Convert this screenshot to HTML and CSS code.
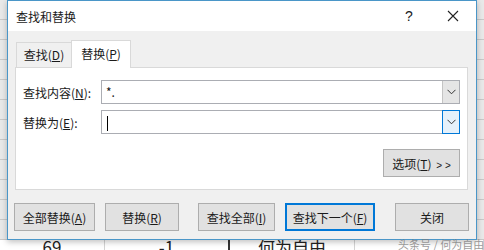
FILE: index.html
```html
<!DOCTYPE html>
<html lang="zh-CN">
<head>
    <meta charset="UTF-8">
    <title>查找和替换</title>
    <link rel="stylesheet" href="styles.css">
</head>
<body>
    <div class="sheet">
        <div class="sheet-row">
            <span class="cell c1">69</span>
            <span class="cell c2">-1</span>
            <span class="cell c3">何为自由</span>
            <span class="cell c4"></span>
        </div>
    </div>

    <div class="dialog">
        <div class="titlebar">
            <span class="title">查找和替换</span>
            <span class="help">?</span>
            <span class="close">
                <svg width="12" height="12" viewBox="0 0 12 12"><path d="M1 1 L11 11 M11 1 L1 11" stroke="#222" stroke-width="1.1" fill="none"/></svg>
            </span>
        </div>

        <div class="body">
            <div class="tabs">
                <div class="tab">查找(<u>D</u>)</div>
                <div class="tab active">替换(<u>P</u>)</div>
            </div>
            <div class="panel">
                <div class="field">
                    <label>查找内容(<u>N</u>):</label>
                    <div class="combo">
                        <span class="value">*.</span>
                        <span class="drop">
                            <svg width="9" height="6" viewBox="0 0 9 6"><path d="M0.5 0.8 L4.5 4.8 L8.5 0.8" stroke="#333" stroke-width="1" fill="none"/></svg>
                        </span>
                    </div>
                </div>
                <div class="field">
                    <label>替换为(<u>E</u>):</label>
                    <div class="combo focus">
                        <span class="value"><i class="caret"></i></span>
                        <span class="drop">
                            <svg width="9" height="6" viewBox="0 0 9 6"><path d="M0.5 0.8 L4.5 4.8 L8.5 0.8" stroke="#333" stroke-width="1" fill="none"/></svg>
                        </span>
                    </div>
                </div>
                <div class="options-row">
                    <button class="btn options">选项(<u>T</u>) <span class="arrows">&gt; &gt;</span></button>
                </div>
            </div>

            <div class="actions">
                <button class="btn b1">全部替换(<u>A</u>)</button>
                <button class="btn b2">替换(<u>R</u>)</button>
                <button class="btn b3">查找全部(<u>I</u>)</button>
                <button class="btn b4 default">查找下一个(<u>F</u>)</button>
                <button class="btn b5">关闭</button>
            </div>
        </div>
    </div>

    <div class="watermark">头条号 / 何为自由</div>
</body>
</html>
```

FILE: styles.css
```css
body {
    margin: 0;
    width: 484px;
    height: 250px;
    overflow: hidden;
    position: relative;
    font-family: "Noto Sans CJK SC", "Liberation Sans", sans-serif;
    font-size: 12px;
    color: #1a1a1a;
    background-color: #e9e9e9;
    background-image: repeating-linear-gradient(to bottom, transparent 0, transparent 19px, #c9c9c9 19px, #c9c9c9 20px);
}

/* 背景表格 */
.sheet {
    position: absolute;
    left: 0;
    top: 240px;
    width: 484px;
    height: 10px;
    background: #fff;
    overflow: hidden;
}

.sheet-row {
    display: flex;
    height: 22px;
    margin-top: -4px;
}

.cell {
    box-sizing: border-box;
    border-right: 1px solid #d4d4d4;
    font-size: 17px;
    line-height: 22px;
    color: #222;
    text-align: center;
}

.c1 { width: 105px; }
.c2 { width: 125px; border-right: 2px solid #333; }
.c3 { width: 125px; }
.c4 { flex: 1; }

/* 对话框 */
.dialog {
    position: absolute;
    left: 7px;
    top: 0;
    width: 470px;
    height: 240px;
    box-sizing: border-box;
    border: 1px solid #4a96c8;
    background: #f0f0f0;
    box-shadow: 0 2px 6px rgba(0, 0, 0, 0.25);
}

.titlebar {
    height: 30px;
    background: #fff;
    display: flex;
    align-items: center;
    padding-left: 8px;
}

.title {
    flex: 1;
    font-size: 12px;
}

.help {
    width: 20px;
    font-family: "Liberation Sans", sans-serif;
    font-size: 14px;
    text-align: center;
    margin-right: 28px;
}

.close {
    width: 12px;
    height: 12px;
    margin-right: 17px;
    display: flex;
}

.body {
    padding: 9px 7px 0 7px;
}

.tabs {
    display: flex;
    align-items: flex-end;
    height: 27px;
    padding-left: 1px;
}

.tab {
    box-sizing: border-box;
    width: 55px;
    height: 25px;
    line-height: 23px;
    text-align: center;
    border: 1px solid #d9d9d9;
    border-bottom: 0;
    border-right: 0;
    background: #f0f0f0;
}

.tab.active {
    width: 60px;
    height: 28px;
    line-height: 26px;
    background: #fff;
    border-right: 1px solid #d9d9d9;
    position: relative;
    top: 1px;
}

.panel {
    box-sizing: border-box;
    width: 453px;
    height: 123px;
    background: #fff;
    border: 1px solid #d9d9d9;
    padding: 12px 6px 0 7px;
}

.field {
    display: flex;
    align-items: center;
    height: 24px;
    margin-bottom: 6px;
}

.field label {
    width: 78px;
}

.combo {
    box-sizing: border-box;
    width: 359px;
    height: 24px;
    border: 1px solid #abadb3;
    display: flex;
    align-items: stretch;
}

.value {
    flex: 1;
    padding-left: 4px;
    line-height: 21px;
}

.caret {
    display: inline-block;
    width: 1px;
    height: 15px;
    background: #000;
    vertical-align: middle;
    margin-left: 1px;
}

.drop {
    box-sizing: border-box;
    width: 17px;
    background: #e5e5e5;
    border-left: 1px solid #c4c4c4;
    display: flex;
    align-items: center;
    justify-content: center;
}

.combo.focus .drop {
    background: #e5f1fb;
    border: 1px solid #0078d7;
    margin: -1px -1px -1px 0;
    width: 18px;
}

.options-row {
    display: flex;
    justify-content: flex-end;
    padding-top: 9px;
    padding-right: 1px;
}

.btn {
    box-sizing: border-box;
    height: 28px;
    padding: 0;
    font-family: inherit;
    font-size: 12px;
    color: #1a1a1a;
    background: #e1e1e1;
    border: 1px solid #adadad;
}

.options {
    width: 77px;
}

.arrows {
    font-family: "Liberation Sans", sans-serif;
    font-size: 10px;
    margin-left: 2px;
}

.actions {
    display: flex;
    margin-top: 13px;
    margin-left: -1px;
}

.b1 { width: 81px; }
.b2 { width: 74px; margin-left: 10px; }
.b3 { width: 77px; margin-left: 19px; }
.b4 { width: 90px; margin-left: 10px; }
.b5 { width: 74px; margin-left: 20px; }

.btn.default {
    border: 2px solid #0078d7;
}

.watermark {
    position: absolute;
    left: 398px;
    top: 236px;
    font-size: 11px;
    color: rgba(120, 120, 120, 0.75);
    white-space: nowrap;
}
```
